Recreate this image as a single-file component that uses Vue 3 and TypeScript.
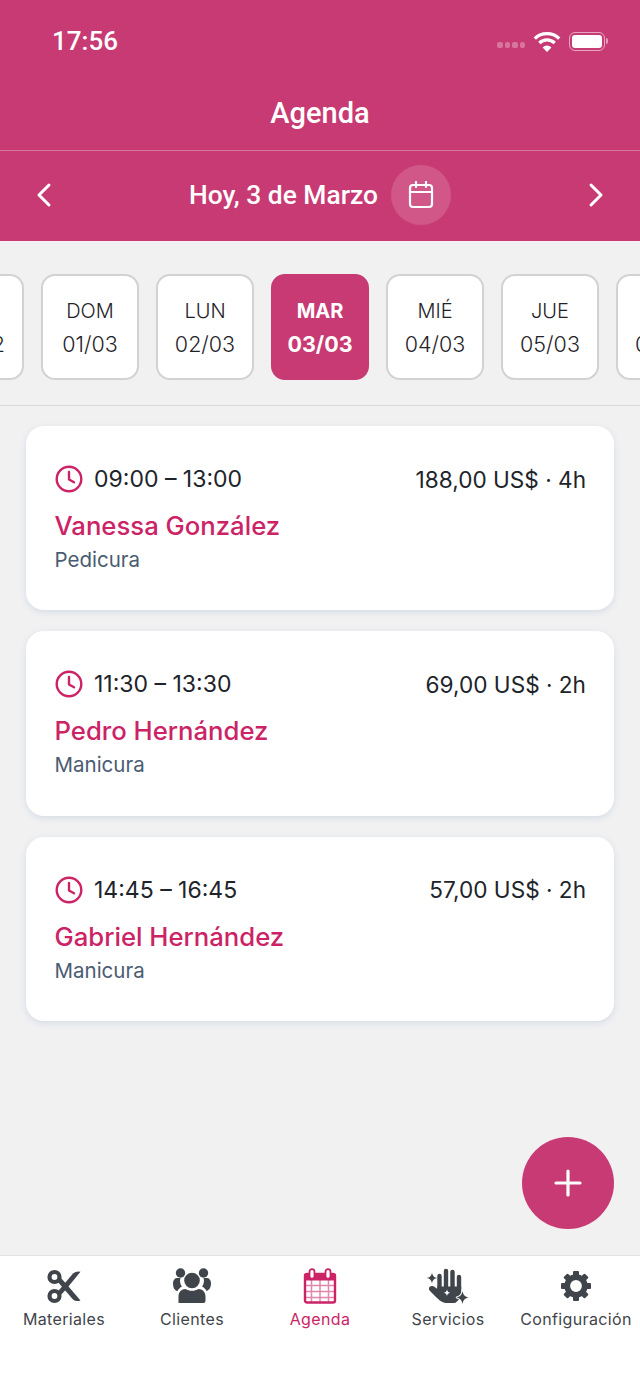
<script setup lang="ts">
const days = [
  { id: 1, d: 'SÁB', n: '29/02', on: false },
  { id: 2, d: 'DOM', n: '01/03', on: false },
  { id: 3, d: 'LUN', n: '02/03', on: false },
  { id: 4, d: 'MAR', n: '03/03', on: true },
  { id: 5, d: 'MIÉ', n: '04/03', on: false },
  { id: 6, d: 'JUE', n: '05/03', on: false },
  { id: 7, d: 'VIE', n: '06/03', on: false },
]
const appts = [
  { id: 1, t: '09:00 – 13:00', p: '188,00 US$ · 4h', n: 'Vanessa González', s: 'Pedicura' },
  { id: 2, t: '11:30 – 13:30', p: '69,00 US$ · 2h', n: 'Pedro Hernández', s: 'Manicura' },
  { id: 3, t: '14:45 – 16:45', p: '57,00 US$ · 2h', n: 'Gabriel Hernández', s: 'Manicura' },
]
const teeth = [0, 45, 90, 135, 180, 225, 270, 315]
</script>

<template>
  <div class="app">
    <header class="head">
      <div class="status">
        <span class="time">17:56</span>
        <div class="sys">
          <span class="dots"><i></i><i></i><i></i><i></i></span>
          <svg width="28" height="21" viewBox="0 0 28 21" fill="none" stroke="#fff" stroke-width="3.4">
            <path d="M1.800 7.600a17.500 17.500 0 0 1 24.400 0" />
            <path d="M6.300 12a11 11 0 0 1 15.400 0" />
            <path d="M14 21l-4.400-4.600a6.200 6.200 0 0 1 8.800 0z" fill="#fff" stroke="none" />
          </svg>
          <span class="batt"><span class="fill"></span></span><span class="nub"></span>
        </div>
      </div>
      <div class="title">Agenda</div>
      <div class="datebar">
        <svg width="18" height="26" viewBox="0 0 18 26" fill="none" stroke="#fff" stroke-width="3" stroke-linecap="round" stroke-linejoin="round"><path d="M14 3 4 13l10 10" /></svg>
        <div class="mid">
          <span class="today">Hoy, 3 de Marzo</span>
          <span class="calbtn">
            <svg width="26" height="28" viewBox="0 0 26 28" fill="none" stroke="#fff" stroke-width="2.2" stroke-linecap="round">
              <rect x="2" y="4" width="22" height="22" rx="3" />
              <path d="M2 11h22M8 1v5M18 1v5" />
            </svg>
          </span>
        </div>
        <svg width="18" height="26" viewBox="0 0 18 26" fill="none" stroke="#fff" stroke-width="3" stroke-linecap="round" stroke-linejoin="round"><path d="m4 3 10 10L4 23" /></svg>
      </div>
    </header>

    <div class="strip">
      <div v-for="x in days" :key="x.id" class="day" :class="{ on: x.on }">
        <span class="dn">{{ x.d }}</span>
        <span class="dd">{{ x.n }}</span>
      </div>
    </div>

    <main class="list">
      <article v-for="a in appts" :key="a.id" class="card">
        <div class="row">
          <span class="when">
            <svg width="28" height="28" viewBox="0 0 28 28" fill="none" stroke="#cc2366" stroke-width="2.4" stroke-linecap="round" stroke-linejoin="round">
              <circle cx="14" cy="14" r="12.300" /><path d="M14 7v7.500l5 2.800" />
            </svg>
            <span>{{ a.t }}</span>
          </span>
          <span class="price">{{ a.p }}</span>
        </div>
        <div class="name">{{ a.n }}</div>
        <div class="svc">{{ a.s }}</div>
      </article>
    </main>

    <div class="fabwrap">
      <button class="fab" type="button" aria-label="Añadir">
        <svg width="28" height="28" viewBox="0 0 28 28" stroke="#fff" stroke-width="3.2" stroke-linecap="round"><path d="M14 2v24M2 14h24" /></svg>
      </button>
    </div>

    <nav class="tabs">
      <div class="tab">
        <svg width="36" height="36" viewBox="0 0 36 36" fill="#3f454b">
          <circle cx="8.500" cy="9" r="5" fill="none" stroke="#3f454b" stroke-width="4.200" />
          <circle cx="8.500" cy="28" r="5" fill="none" stroke="#3f454b" stroke-width="4.200" />
          <path d="M11 24.500 27 5.500Q30 3 34.500 3.800L19.500 22 14 28Z" />
          <path d="M14 9 19.500 15 34.500 32.500Q30 34 27 31.500L11 13Z" />
        </svg>
        <span>Materiales</span>
      </div>
      <div class="tab">
        <svg width="40" height="36" viewBox="0 0 40 36" fill="#3f454b">
          <circle cx="8.500" cy="5" r="4.700" /><circle cx="31.500" cy="5" r="4.700" />
          <path d="M1 15c0-3 2-5 4-5h3.500a9 9 0 0 0 1.500 8.500c-2 1-3.500 2.500-4.500 4.500C2 22.500 1 19 1 15ZM39 15c0-3-2-5-4-5h-3.500a9 9 0 0 1-1.500 8.500c2 1 3.500 2.500 4.500 4.500 3.500-1 4.500-4.500 4.500-8Z" />
          <g stroke="#fff" stroke-width="1.500" paint-order="stroke">
            <circle cx="20" cy="12.500" r="7.800" />
            <path d="M6.500 35V28.500c0-4.500 3-7.500 7-7.500 2 1.200 4 1.800 6.500 1.800s4.500-.6 6.500-1.800c4 0 7 3 7 7.500V33a2 2 0 0 1-2 2Z" />
          </g>
        </svg>
        <span>Clientes</span>
      </div>
      <div class="tab active">
        <svg width="36" height="36" viewBox="0 0 36 36" fill="none" stroke="#cc2366">
          <path stroke-width="1.500" opacity=".55" d="M3 17.500h30M3 23.500h30M3 29.500h30M9.500 12v22M18 12v22M26.500 12v22" />
          <rect x="3" y="6" width="30" height="28.500" rx="2" stroke-width="2.400" />
          <path fill="#cc2366" stroke="none" d="M3 6h30v6.500H3Z" />
          <rect x="7.500" y="1.200" width="5" height="9.500" rx="2.500" fill="#fff" stroke-width="1.800" />
          <rect x="23.500" y="1.200" width="5" height="9.500" rx="2.500" fill="#fff" stroke-width="1.800" />
        </svg>
        <span>Agenda</span>
      </div>
      <div class="tab">
        <svg width="44" height="36" viewBox="0 0 44 36" fill="#3f454b">
          <g stroke="#3f454b" stroke-width="4.400" stroke-linecap="round">
            <path d="M13.500 21V8M20 21V3M26.500 21V4M33 21V9" />
          </g>
          <path d="M11.300 18.500H35.200V25C35 30 32 33 29 35H20C16 35 12 31 9 28L4 23C2 21 3 18 6 18 8 18 10 20 11.300 21Z" />
          <path d="M6 4.500c.6 3.500 2 4.900 5.500 5.500C8 10.600 6.600 12 6 15.500 5.400 12 4 10.600.5 10 4 9.400 5.400 8 6 4.500Z" />
          <path d="M36.500 23c.7 4 2.500 5.800 6.500 6.500-4 .7-5.800 2.500-6.500 6.500-.7-4-2.500-5.800-6.500-6.500 4-.7 5.800-2.500 6.500-6.500Z" stroke="#fff" stroke-width="1.600" paint-order="stroke" />
          <path fill="#fff" d="M21 21.500c.4 2 1.300 2.900 3.300 3.300-2 .4-2.900 1.300-3.300 3.300-.4-2-1.300-2.900-3.300-3.300 2-.4 2.900-1.300 3.300-3.300Z" />
        </svg>
        <span>Servicios</span>
      </div>
      <div class="tab">
        <svg width="36" height="36" viewBox="0 0 36 36" fill="#3f454b">
          <circle cx="18" cy="18" r="8.800" fill="none" stroke="#3f454b" stroke-width="5.800" />
          <rect v-for="r in teeth" :key="r" x="15" y="3" width="6" height="5" rx="1" :transform="`rotate(${r} 18 18)`" />
        </svg>
        <span>Configuración</span>
      </div>
    </nav>
  </div>
</template>

<style>
html, body { margin: 0; background: #f1f1f2; }
</style>

<style scoped>
.app {
  width: 640px;
  height: 1385px;
  display: flex;
  flex-direction: column;
  overflow: hidden;
  background: #f1f1f2;
  font-family: Inter, "Liberation Sans", sans-serif;
  color: #1f2328;
}
.head { background: #c83a73; color: #fff; height: 241px; flex: none; }
.status {
  height: 82px;
  padding: 0 32px 0 52px;
  display: flex;
  align-items: center;
  justify-content: space-between;
  box-sizing: border-box;
}
.time { font: 500 26px Roboto, sans-serif; }
.sys { display: flex; align-items: center; }
.dots { display: flex; gap: 2px; margin-right: 8px; margin-top: 8px; }
.dots i { width: 5.500px; height: 5.500px; border-radius: 2px; background: rgba(255,255,255,.3); }
.batt {
  width: 36px; height: 19px; margin-left: 8px; box-sizing: border-box; padding: 2px;
  border: 1.500px solid rgba(255,255,255,.55); border-radius: 6px; display: block;
}
.fill { display: block; height: 100%; background: #fff; border-radius: 3px; }
.nub { width: 2px; height: 6px; margin-left: 1px; background: rgba(255,255,255,.5); border-radius: 0 2px 2px 0; }
.title {
  height: 62px;
  padding-bottom: 6px;
  border-bottom: 1px solid rgba(255,255,255,.3);
  display: flex;
  align-items: center;
  justify-content: center;
  font: 500 29px Roboto, sans-serif;
}
.datebar {
  height: 88px;
  padding: 0 35px 2px;
  display: flex;
  align-items: center;
  justify-content: space-between;
}
.mid { display: flex; align-items: center; gap: 13px; }
.today { font: 500 26.400px Roboto, sans-serif; }
.calbtn {
  width: 60px; height: 60px; border-radius: 50%;
  background: rgba(255,255,255,.15);
  display: flex; align-items: center; justify-content: center;
}
.strip {
  height: 165px;
  flex: none;
  border-bottom: 1px solid #d9d9d9;
  display: flex;
  justify-content: center;
  align-items: flex-start;
  gap: 17px;
  padding-top: 33px;
  box-sizing: border-box;
}
.day {
  flex: none;
  width: 98px;
  height: 106px;
  box-sizing: border-box;
  background: #fff;
  border: 2px solid #d2d2d2;
  border-radius: 14px;
  display: flex;
  flex-direction: column;
  align-items: center;
  justify-content: center;
  gap: 7px;
  font-size: 20px;
  font-weight: 300;
  line-height: 26px;
}
.dd { font-size: 21.500px; }
.day.on { background: #c83a73; border-color: #c83a73; color: #fff; font-weight: 700; }
.list {
  flex: 1;
  min-height: 0;
  padding: 20px 26px 0;
  display: flex;
  flex-direction: column;
  gap: 21px;
}
.card {
  height: 184.250px;
  flex: none;
  box-sizing: border-box;
  background: #fff;
  border-radius: 18px;
  box-shadow: 0 2px 6px rgba(130,160,190,.25);
  padding: 38px 28px 0 28.500px;
}
.row {
  display: flex;
  justify-content: space-between;
  align-items: center;
  font-size: 23px;
  font-weight: 400;
  height: 30px;
  color: #20242a;
}
.when { display: flex; align-items: center; gap: 11.500px; }
.price { font-size: 22.600px; }
.name { margin-top: 16px; font-size: 25.700px; font-weight: 500; line-height: 32px; color: #cc2366; }
.svc { margin-top: 5px; font-size: 20.500px; line-height: 26px; color: #4a5c72; }
.fabwrap { flex: none; height: 118px; padding-right: 26px; display: flex; justify-content: flex-end; align-items: flex-start; box-sizing: border-box; }
.fab {
  width: 92px; height: 92px; border: 0; border-radius: 50%; padding: 0;
  background: #c83a73;
  display: flex; align-items: center; justify-content: center;
}
.tabs {
  flex: none;
  height: 130px;
  box-sizing: border-box;
  background: #fff;
  border-top: 1px solid #e2e2e2;
  display: grid;
  grid-template-columns: repeat(5, 128px);
  padding-top: 12px;
}
.tab {
  display: flex;
  flex-direction: column;
  align-items: center;
  font-size: 16px;
  letter-spacing: .35px;
  color: #3f454b;
  white-space: nowrap;
}
.tab svg { height: 36px; display: block; }
.tab span { margin-top: 3px; line-height: 24px; }
.tab.active { color: #cc2366; }
</style>
